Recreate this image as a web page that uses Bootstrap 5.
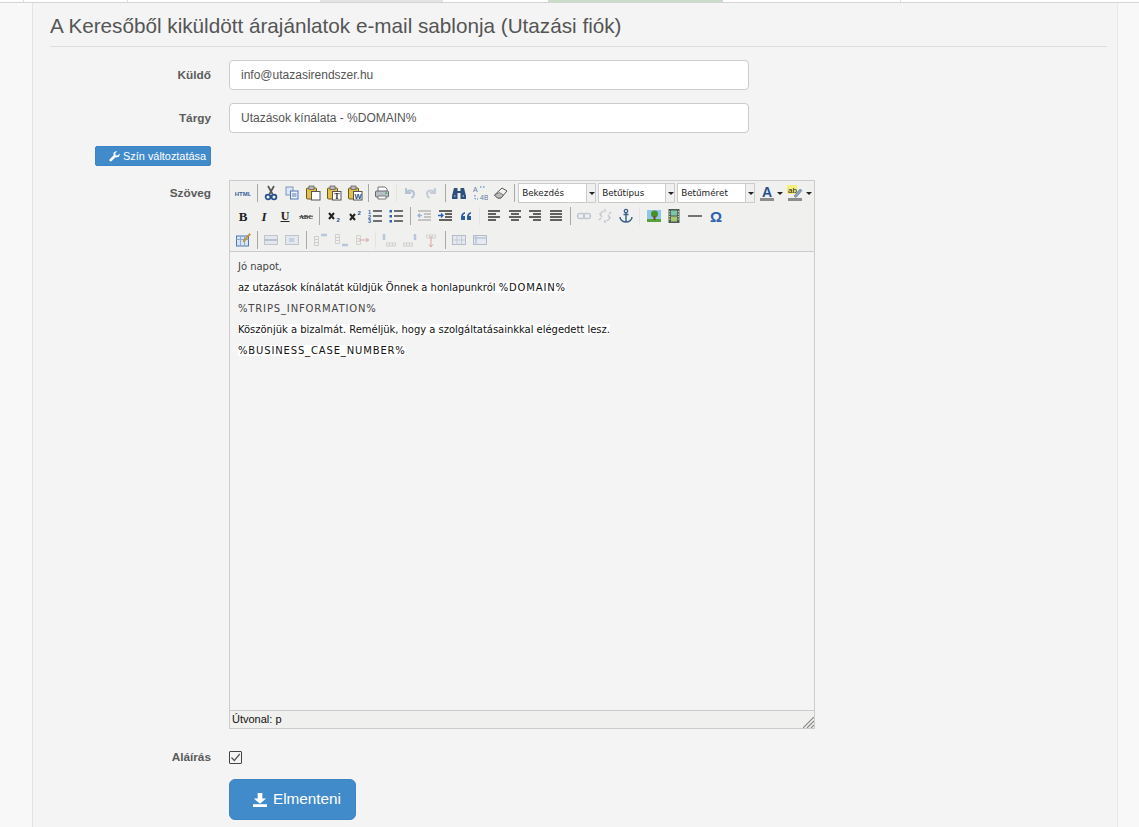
<!DOCTYPE html>
<html lang="hu">
<head>
<meta charset="utf-8">
<title>E-mail sablon</title>
<link href="https://cdn.jsdelivr.net/npm/bootstrap@5.3.0/dist/css/bootstrap.min.css" rel="stylesheet">
<style>
html,body{height:827px;overflow:hidden}
body{background:#f8f8f8;font-family:"Liberation Sans",Arial,sans-serif;font-size:12px;color:#555}
.spritedefs{position:absolute;width:0;height:0}
.topstrip{height:3px;background:#fff;border-bottom:1px solid #d4d4d4}
.tabcell{height:2px}
.t-a{width:24px;border-right:1px solid #ddd}
.t-b{width:104px;border-right:1px solid #ddd}
.t-c{width:192px}
.t-d{width:123px;background:#e4e4e4}
.t-e{width:105px;background:#fff}
.t-f{width:175px;background:#c8dcc8}
.t-g{width:178px;border-right:1px solid #ddd}
.sheet{margin-left:32px;margin-right:21px;height:824px;background:#f4f4f4;border-left:1px solid #e3e3e3;border-right:1px solid #e9e9e9;padding:0 10px 0 17px}
.pagehead{font-size:20.7px;line-height:24px;color:#555;font-weight:400;margin:0;padding:11px 0 8px;border-bottom:1px solid #ddd;height:44px}
.frow{display:flex;gap:18px;align-items:flex-start}
.flabel{width:161px;flex:none;text-align:right;font-weight:700;font-size:11.8px;color:#5a5a5a;margin:0;line-height:16px}
.lab-input{padding-top:7px}
.lab-editor{padding-top:5px}
.finput{width:520px;height:30px;border:1px solid #ccc;border-radius:4px;background:#fff;color:#555;font-size:12px;padding:0 11px;box-shadow:none}
.colorbtn{width:116px;height:20px;padding:0 4px 0 0;background:#428bca;border:1px solid #3c84c4;border-radius:2px;color:#fff;font-size:10.9px;line-height:18px;display:flex;align-items:center;justify-content:flex-end;gap:3px}
.colorbtn:hover{background:#428bca;color:#fff}
.editorbox{width:586px;height:549px;border:1px solid #ccc;background:#f4f4f4;display:flex;flex-direction:column}
.tbar{height:71px;background:#f0f0ee;border-bottom:1px solid #ccc;padding:0 0 0 3px;flex:none}
.tline{display:flex;align-items:center;height:23.5px}
.tb{width:20.85px;height:20px;flex:none;display:flex;align-items:center;justify-content:center}
.tb svg{width:16px;height:16px;display:block}
.tsep{width:7px;height:18px;flex:none;display:flex;justify-content:center}
.tsep::before{content:"";width:1px;background:#a8a8a8}
.tsep.lite::before{background:#e4e4e4}
.tsel{height:20px;background:#fff;border:1px solid #ccc;font:8.8px/18px "DejaVu Sans",Verdana,sans-serif;color:#222;display:flex;justify-content:space-between;flex:none;margin-right:2px;padding-left:3px}
.sel-a{width:78px}.sel-b{width:77px}.sel-c{width:78px;margin-right:1px}
.tsel i{display:block;width:9px;background:#f0f0ee;border-left:1px solid #ccc;position:relative;font-style:normal}
.tsel i::after,.caretb::after{content:"";position:absolute;left:2px;top:8px;border:3px solid transparent;border-top:3px solid #222;border-bottom:0}
.caretb{width:8px;height:16px;position:relative;flex:none}
.caretb::after{left:0;top:7px}
.etext{flex:1;padding:4px 8px 0;font:10px/21px "DejaVu Sans",Verdana,sans-serif;letter-spacing:-.03px;color:#444}
.etext p{margin:0;height:21px;white-space:nowrap}
.etext span{background:#fff;color:#111}
.etext b{font-weight:400;letter-spacing:.85px}
.estatus{height:18px;background:#f0f0ee;border-top:1px solid #ccc;font-size:11px;line-height:17px;color:#111;padding-left:2px;display:flex;justify-content:space-between;align-items:flex-end;flex:none}
.estatus svg{display:block}
.signbox{width:13px;height:13px;border:1px solid #444;border-radius:1px;background:#f4f4f4;display:flex;align-items:center;justify-content:center}
.savebtn{width:127px;height:41px;background:#428bca;border:1px solid #3c84c4;border-radius:6px;color:#fff;font-size:15.3px;padding:0 0 0 9px;display:flex;align-items:center;justify-content:center;gap:6px}
.savebtn:hover{background:#428bca;color:#fff}
.r1{margin-top:13px}.r2{margin-top:13px}.r3{margin-top:13px}.r4{margin-top:14px}.r5{margin-top:20px}.r6{margin-top:14px}
</style>
</head>
<body>
<svg class="spritedefs">
<defs>
<symbol id="lines-l" viewBox="0 0 16 16"><path d="M2 3h12M2 6h8M2 9h12M2 12h8" stroke="#333" stroke-width="1.4"/></symbol>
<symbol id="lines-c" viewBox="0 0 16 16"><path d="M2 3h12M4 6h8M2 9h12M4 12h8" stroke="#333" stroke-width="1.4"/></symbol>
<symbol id="lines-r" viewBox="0 0 16 16"><path d="M2 3h12M6 6h8M2 9h12M6 12h8" stroke="#333" stroke-width="1.4"/></symbol>
<symbol id="lines-j" viewBox="0 0 16 16"><path d="M2 3h12M2 6h12M2 9h12M2 12h12" stroke="#333" stroke-width="1.6"/></symbol>
<symbol id="paste" viewBox="0 0 16 16"><rect x="1.500" y="3" width="10" height="11" rx="1" fill="#e3c04a" stroke="#6b5a1c"/><rect x="4" y="1" width="5" height="3.500" fill="#bbb" stroke="#555" stroke-width=".7"/><rect x="6.500" y="6.500" width="8.500" height="8.500" fill="#fff" stroke="#555"/></symbol>
<symbol id="tbl" viewBox="0 0 16 16"><rect x="1.500" y="3.500" width="13" height="9" fill="#e6eaf0" stroke="#b5bcc6"/><path d="M1.500 8h13M6 3.500v9M10.500 3.500v9" stroke="#c4cad3"/></symbol>
<symbol id="col" viewBox="0 0 16 16"><path d="M2.500 4.500h4v3h-4zM2.500 7.500h4v3h-4zM2.500 10.500h4v3h-4z" fill="#f0f0ee" stroke="#cfcfcf"/><path d="M9 3h6" stroke="#b8c8dc" stroke-width="2.500"/></symbol>
<symbol id="row" viewBox="0 0 16 16"><path d="M5.500 11h3v3h-3zM8.500 11h3v3h-3zM11.500 11h3v3h-3z" fill="#f0f0ee" stroke="#cfcfcf"/><path d="M3 2v6" stroke="#b8c8dc" stroke-width="2.500"/></symbol>
</defs>
</svg>

<div class="topstrip d-flex">
  <div class="tabcell t-a"></div><div class="tabcell t-b"></div><div class="tabcell t-c"></div><div class="tabcell t-d"></div><div class="tabcell t-e"></div><div class="tabcell t-f"></div><div class="tabcell t-g"></div>
</div>

<main class="sheet">
  <h1 class="pagehead">A Keresőből kiküldött árajánlatok e-mail sablonja (Utazási fiók)</h1>

  <div class="frow r1"><label class="flabel lab-input" for="f1">Küldő</label><input id="f1" class="finput" type="text" value="info@utazasirendszer.hu"></div>
  <div class="frow r2"><label class="flabel lab-input" for="f2">Tárgy</label><input id="f2" class="finput" type="text" value="Utazások kínálata - %DOMAIN%"></div>

  <div class="frow r3">
    <div class="flabel d-flex justify-content-end">
      <button type="button" class="btn colorbtn">
        <svg width="11" height="11" viewBox="0 0 12 12"><path d="M11.500 2.800 9.300 5 7.200 4.600 6.800 2.500 9 .4C7.200-.1 5.200 1 4.900 2.800c-.1.700 0 1.300.2 1.800L.8 8.900c-.6.600-.6 1.500 0 2.100s1.500.6 2.100 0l4.300-4.300c.5.200 1.200.3 1.800.2 1.900-.3 3-2.200 2.500-4.100z" fill="#fff"/></svg>
        Szín változtatása
      </button>
    </div>
  </div>

  <div class="frow r4">
    <div class="flabel lab-editor">Szöveg</div>
    <div class="editorbox">
      <div class="tbar">
        <div class="tline">
          <span class="tb"><svg viewBox="0 0 16 16"><text x="8" y="10.500" text-anchor="middle" font-family="Liberation Sans" font-size="6" font-weight="700" fill="#3a5f96">HTML</text></svg></span>
          <span class="tsep"></span>
          <span class="tb"><svg viewBox="0 0 16 16"><path d="M5 1l4.500 8M11 1 6.500 9" stroke="#555" stroke-width="1.700" fill="none"/><circle cx="5" cy="12" r="2.400" fill="none" stroke="#26508c" stroke-width="1.700"/><circle cx="11" cy="12" r="2.400" fill="none" stroke="#26508c" stroke-width="1.700"/></svg></span>
          <span class="tb"><svg viewBox="0 0 16 16"><rect x="2" y="2" width="7" height="8" fill="#dce6f4" stroke="#7f97bd"/><rect x="6.500" y="6" width="7.500" height="8" fill="#eef3fa" stroke="#4e78b5"/><path d="M8 9h4.500M8 11h4.500" stroke="#4e78b5"/></svg></span>
          <span class="tb"><svg viewBox="0 0 16 16"><use href="#paste"/></svg></span>
          <span class="tb"><svg viewBox="0 0 16 16"><use href="#paste"/><text x="11" y="14" text-anchor="middle" font-family="Liberation Serif" font-size="8" font-weight="700" fill="#222">T</text></svg></span>
          <span class="tb"><svg viewBox="0 0 16 16"><use href="#paste"/><text x="11" y="14" text-anchor="middle" font-family="Liberation Sans" font-size="7.500" font-weight="700" fill="#26508c">W</text></svg></span>
          <span class="tsep"></span>
          <span class="tb"><svg viewBox="0 0 16 16"><path d="M4 6V2h7l2 2v2" fill="#fff" stroke="#777"/><rect x="1.500" y="6" width="13" height="6" rx="1" fill="#b9bfc7" stroke="#626871"/><path d="M4 11h8v3H4z" fill="#fff" stroke="#777"/><rect x="11.500" y="7.500" width="1.500" height="1.500" fill="#39a845"/></svg></span>
          <span class="tsep lite"></span>
          <span class="tb"><svg viewBox="0 0 16 16"><path d="M4 3v5h5M4 8c2-3.500 8-3.500 8 1 0 2-1 3-2.500 4" fill="none" stroke="#b4c2d4" stroke-width="2"/></svg></span>
          <span class="tb"><svg viewBox="0 0 16 16"><path d="M12 3v5H7M12 8c-2-3.500-8-3.500-8 1 0 2 1 3 2.500 4" fill="none" stroke="#c3ccd8" stroke-width="2"/></svg></span>
          <span class="tsep"></span>
          <span class="tb"><svg viewBox="0 0 16 16"><path d="M3 3h3.500v3H9.500V3H13l2 8v3H9.500V8h-3v6H1v-3z" fill="#2c4f7c"/><path d="M3 11h1.500M11.500 11H13" stroke="#cfe0f2"/></svg></span>
          <span class="tb"><svg viewBox="0 0 16 16"><text x="1" y="7" font-family="Liberation Sans" font-size="7" fill="#5d7ea8">A</text><text x="8" y="15" font-family="Liberation Sans" font-size="7" fill="#5d7ea8">4B</text><path d="M8 2h4.500M3 10v4h3" stroke="#3f7bc4" stroke-dasharray="1.500 1.500" fill="none"/></svg></span>
          <span class="tb"><svg viewBox="0 0 16 16"><path d="M1.500 10 9 3l5 3-6 7H4.500z" fill="#f2f2f2" stroke="#555"/><path d="M1.500 10l3 3H8l2.500-3-4-2.500z" fill="#bbb" stroke="#555" stroke-width=".7"/></svg></span>
          <span class="tsep"></span>
          <div class="tsel sel-a">Bekezdés<i></i></div>
          <div class="tsel sel-b">Betűtípus<i></i></div>
          <div class="tsel sel-c">Betűméret<i></i></div>
          <span class="tb"><svg viewBox="0 0 16 16"><text x="8" y="12" text-anchor="middle" font-family="Liberation Sans" font-size="14" font-weight="700" fill="#26508c">A</text><rect x="1" y="13" width="14" height="3" fill="#8d8d8d"/></svg></span>
          <span class="caretb"></span>
          <span class="tb"><svg viewBox="0 0 16 16"><rect x="0" y="0" width="10" height="9" fill="#f4ee7a"/><text x="1" y="8" font-family="Liberation Sans" font-size="8" fill="#222">ab</text><path d="M7 11l6-7 2 1.500-6 7z" fill="#8aa3c4" stroke="#566" stroke-width=".5"/><rect x="1" y="13" width="14" height="3" fill="#8d8d8d"/></svg></span>
          <span class="caretb"></span>
        </div>
        <div class="tline">
          <span class="tb"><svg viewBox="0 0 16 16"><text x="8" y="12.500" text-anchor="middle" font-family="Liberation Serif" font-size="13" font-weight="700" fill="#222">B</text></svg></span>
          <span class="tb"><svg viewBox="0 0 16 16"><text x="8" y="12.500" text-anchor="middle" font-family="Liberation Serif" font-size="13" font-style="italic" font-weight="700" fill="#222">I</text></svg></span>
          <span class="tb"><svg viewBox="0 0 16 16"><text x="8" y="11.500" text-anchor="middle" font-family="Liberation Serif" font-size="12" font-weight="700" fill="#222">U</text><path d="M3.500 13.500h9" stroke="#222"/></svg></span>
          <span class="tb"><svg viewBox="0 0 16 16"><text x="8" y="11" text-anchor="middle" font-family="Liberation Serif" font-size="6.500" font-weight="700" fill="#222">ABC</text><path d="M1 8.500h14" stroke="#555" stroke-width=".8"/></svg></span>
          <span class="tsep"></span>
          <span class="tb"><svg viewBox="0 0 16 16"><path d="M3 5l5 6M8 5l-5 6" stroke="#222" stroke-width="2"/><text x="10.500" y="14" font-family="Liberation Sans" font-size="6" font-weight="700" fill="#26508c">2</text></svg></span>
          <span class="tb"><svg viewBox="0 0 16 16"><path d="M3 6l5 6M8 6l-5 6" stroke="#222" stroke-width="2"/><text x="10.500" y="7" font-family="Liberation Sans" font-size="6" font-weight="700" fill="#26508c">2</text></svg></span>
          <span class="tb"><svg viewBox="0 0 16 16"><path d="M6 3h9M6 8h9M6 13h9" stroke="#444" stroke-width="1.300"/><text x="1" y="6" font-family="Liberation Sans" font-size="5.500" font-weight="700" fill="#2a62b0">1</text><text x="1" y="10.500" font-family="Liberation Sans" font-size="5.500" font-weight="700" fill="#2a62b0">2</text><text x="1" y="15" font-family="Liberation Sans" font-size="5.500" font-weight="700" fill="#2a62b0">3</text></svg></span>
          <span class="tb"><svg viewBox="0 0 16 16"><path d="M6 3h9M6 8h9M6 13h9" stroke="#444" stroke-width="1.300"/><rect x="1.500" y="2" width="2.500" height="2.500" fill="#2a62b0"/><rect x="1.500" y="7" width="2.500" height="2.500" fill="#2a62b0"/><rect x="1.500" y="12" width="2.500" height="2.500" fill="#2a62b0"/></svg></span>
          <span class="tsep"></span>
          <span class="tb"><svg viewBox="0 0 16 16"><path d="M2 3h13M8 6h7M8 9h7M2 12h13" stroke="#b5b5b5" stroke-width="1.300"/><path d="M6 7.500H2M4 5.500l-2 2 2 2" stroke="#9bb5d6" fill="none" stroke-width="1.300"/></svg></span>
          <span class="tb"><svg viewBox="0 0 16 16"><path d="M2 3h13M8 6h7M8 9h7M2 12h13" stroke="#333" stroke-width="1.300"/><path d="M1 7.500h5M4 5.500l2 2-2 2" stroke="#2a62b0" fill="none" stroke-width="1.300"/></svg></span>
          <span class="tb"><svg viewBox="0 0 16 16"><path d="M7 4C4.500 4.500 3 6.500 3 9v3h4V8H5c0-1 1-2 2-2.200zM13 4c-2.500.5-4 2.500-4 5v3h4V8h-2c0-1 1-2 2-2.200z" fill="#2c5c9c"/></svg></span>
          <span class="tsep lite"></span>
          <span class="tb"><svg viewBox="0 0 16 16"><use href="#lines-l"/></svg></span>
          <span class="tb"><svg viewBox="0 0 16 16"><use href="#lines-c"/></svg></span>
          <span class="tb"><svg viewBox="0 0 16 16"><use href="#lines-r"/></svg></span>
          <span class="tb"><svg viewBox="0 0 16 16"><use href="#lines-j"/></svg></span>
          <span class="tsep"></span>
          <span class="tb"><svg viewBox="0 0 16 16"><rect x="1.500" y="5.500" width="7" height="5" rx="2.500" fill="none" stroke="#c3c9d2" stroke-width="1.500"/><rect x="7.500" y="5.500" width="7" height="5" rx="2.500" fill="none" stroke="#c3c9d2" stroke-width="1.500"/></svg></span>
          <span class="tb"><svg viewBox="0 0 16 16"><path d="M6 3 3 6l2 3M10 13l3-3-2-3M8 1v3M8 12v3M2 12l2-2M14 4l-2 2" fill="none" stroke="#c3c9d2" stroke-width="1.500"/></svg></span>
          <span class="tb"><svg viewBox="0 0 16 16"><circle cx="8" cy="3" r="1.700" fill="none" stroke="#3d638f" stroke-width="1.300"/><path d="M8 5v9M5.500 6.500h5M2 9c0 3 3 5 6 5s6-2 6-5" fill="none" stroke="#3d638f" stroke-width="1.500"/></svg></span>
          <span class="tsep lite"></span>
          <span class="tb"><svg viewBox="0 0 16 16"><rect x="1" y="2" width="14" height="12" fill="#8fc6e8"/><rect x="1" y="11" width="14" height="3" fill="#55a43a"/><circle cx="8.500" cy="6" r="3.500" fill="#4a8f2a"/><rect x="7.500" y="8" width="2" height="4" fill="#7a4a1e"/></svg></span>
          <span class="tb"><svg viewBox="0 0 16 16"><rect x="2.500" y="1" width="11" height="14" fill="#4b5c52"/><rect x="5" y="2.500" width="6" height="5" fill="#7cc6a6"/><rect x="5" y="8.500" width="6" height="5" fill="#a8c96a"/><path d="M3.700 3v10M12.300 3v10" stroke="#e6e6e6" stroke-dasharray="1.200 1.300"/></svg></span>
          <span class="tb"><svg viewBox="0 0 16 16"><path d="M1 8h14" stroke="#222" stroke-width="1.200"/></svg></span>
          <span class="tb"><svg viewBox="0 0 16 16"><text x="8" y="13.500" text-anchor="middle" font-family="Liberation Sans" font-size="15" font-weight="700" fill="#2a62b0">Ω</text></svg></span>
        </div>
        <div class="tline">
          <span class="tb"><svg viewBox="0 0 16 16"><rect x="1.500" y="4" width="12" height="10" fill="#d9e4f2" stroke="#4e78b5"/><path d="M1.500 7.500h12M5.500 4v10M9.500 4v10" stroke="#8fa9cc"/><path d="M8 9l6.500-7.500 1 1L9 10z" fill="#e6a52c" stroke="#8b6a1c" stroke-width=".5"/></svg></span>
          <span class="tsep"></span>
          <span class="tb"><svg viewBox="0 0 16 16"><rect x="1.500" y="3.500" width="13" height="9" fill="#e4e8ee" stroke="#c0c5cc"/><path d="M1.500 8h13" stroke="#b8c2d0" stroke-width="2"/></svg></span>
          <span class="tb"><svg viewBox="0 0 16 16"><rect x="1.500" y="3.500" width="13" height="9" fill="#e4e8ee" stroke="#c0c5cc"/><rect x="5" y="6" width="5" height="4" fill="#c5d0de"/></svg></span>
          <span class="tsep"></span>
          <span class="tb"><svg viewBox="0 0 16 16"><use href="#col"/></svg></span>
          <span class="tb"><svg viewBox="0 0 16 16"><g transform="translate(0 16) scale(1 -1)"><use href="#col"/></g></svg></span>
          <span class="tb"><svg viewBox="0 0 16 16"><path d="M2.500 3.500h4v3h-4zM2.500 6.500h4v3h-4zM2.500 9.500h4v3h-4z" fill="#f0f0ee" stroke="#d2d2d2"/><path d="M5 8h10M12 6l2.500 2-2.500 2" stroke="#d9a5a5" fill="none"/></svg></span>
          <span class="tsep lite"></span>
          <span class="tb"><svg viewBox="0 0 16 16"><use href="#row"/></svg></span>
          <span class="tb"><svg viewBox="0 0 16 16"><g transform="translate(16 0) scale(-1 1)"><use href="#row"/></g></svg></span>
          <span class="tb"><svg viewBox="0 0 16 16"><path d="M3.500 3h3v3h-3zM6.500 3h3v3h-3zM9.500 3h3v3h-3z" fill="#f0f0ee" stroke="#d2d2d2"/><path d="M8 4v11M6 12.500l2 2.500 2-2.500" stroke="#d9a5a5" fill="none"/></svg></span>
          <span class="tsep"></span>
          <span class="tb"><svg viewBox="0 0 16 16"><use href="#tbl"/></svg></span>
          <span class="tb"><svg viewBox="0 0 16 16"><rect x="1.500" y="3.500" width="13" height="9" fill="#e6eaf0" stroke="#b5bcc6"/><path d="M1.500 6h13M4 3.500v9" stroke="#b5c6dc" stroke-width="1.500"/></svg></span>
        </div>
      </div>
      <div class="etext">
        <p>Jó napot,</p>
        <p><span>az utazások kínálatát küldjük Önnek a honlapunkról <b>%DOMAIN%</b></span></p>
        <p><b>%TRIPS_INFORMATION%</b></p>
        <p><span>Köszönjük a bizalmát. Reméljük, hogy a szolgáltatásainkkal elégedett lesz.</span></p>
        <p><span><b>%BUSINESS_CASE_NUMBER%</b></span></p>
      </div>
      <div class="estatus">Útvonal: p
        <svg width="11" height="11" viewBox="0 0 11 11"><path d="M0 11 11 0M4 11l7-7M8 11l3-3" stroke="#888" stroke-width="1.200"/></svg>
      </div>
    </div>
  </div>

  <div class="frow r5 align-items-center">
    <div class="flabel">Aláírás</div>
    <div class="signbox"><svg width="11" height="11" viewBox="0 0 11 11"><path d="M1.500 5.500 4.300 8.500 9.800 2" fill="none" stroke="#555" stroke-width="1.200"/></svg></div>
  </div>

  <div class="frow r6">
    <div class="flabel"></div>
    <button type="button" class="btn savebtn">
      <svg width="14" height="14" viewBox="0 0 15 15"><path d="M5 0h5v6h4L7.500 11.500 1 6h4z" fill="#fff"/><rect x="0" y="12" width="15" height="3" fill="#fff"/></svg>
      Elmenteni
    </button>
  </div>
</main>
<script src="https://cdn.jsdelivr.net/npm/bootstrap@5.3.0/dist/js/bootstrap.bundle.min.js"></script>
</body>
</html>
